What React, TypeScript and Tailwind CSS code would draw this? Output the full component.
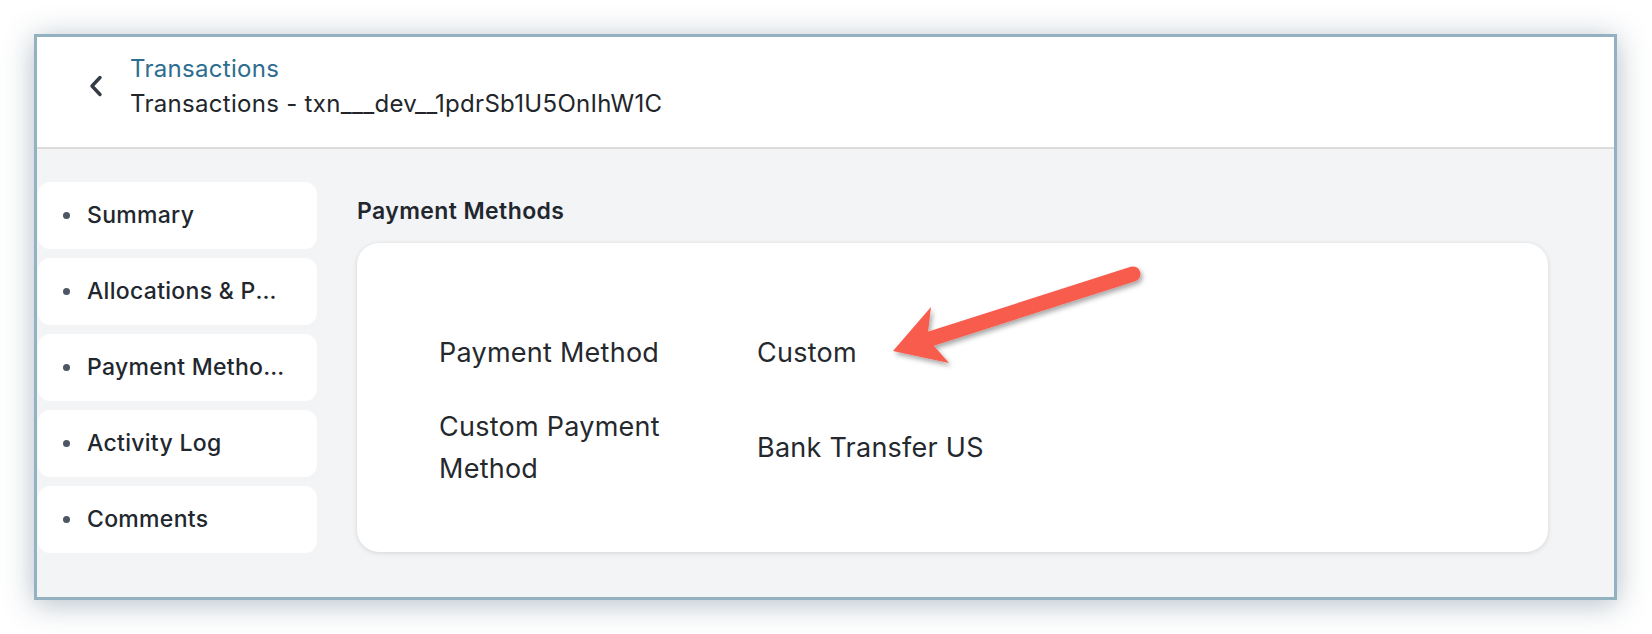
import React from 'react';

const navItems: string[] = [
  'Summary',
  'Allocations & Payments',
  'Payment Methods',
  'Activity Log',
  'Comments',
];

const details = [
  { label: 'Payment Method', value: 'Custom' },
  { label: 'Custom Payment Method', value: 'Bank Transfer US' },
];

const App: React.FC = () => {
  return (
    <div className="relative w-[1652px] h-[634px] bg-white pl-[34px] pr-[35px] pt-[34px] font-['Inter','Noto_Sans',sans-serif]">
      <div className="h-[566px] flex flex-col border-[3px] border-[#93b1c1] bg-[#f3f4f6] shadow-[0_4px_28px_rgba(40,70,95,0.35)]">
        {/* Header */}
        <header className="h-[112px] shrink-0 bg-white border-b-2 border-[#dcdcdc] pt-[13px] pl-[51px]">
          <div className="flex items-center h-[71px]">
            <svg width="16" height="24" viewBox="0 0 16 24" className="shrink-0">
              <polyline
                points="12,3.5 4,12 12,20.5"
                fill="none"
                stroke="#343b45"
                strokeWidth="3.4"
                strokeLinecap="round"
                strokeLinejoin="round"
              />
            </svg>
            <div className="ml-[26px]">
              <div className="text-[24px] leading-[35px] tracking-[0.3px] text-[#2d6d8f]">Transactions</div>
              <div className="text-[24px] leading-[35px] tracking-[0.3px] text-[#22262b]">
                Transactions - txn___dev__1pdrSb1U5OnIhW1C
              </div>
            </div>
          </div>
        </header>

        {/* Body */}
        <div className="flex flex-1 pt-[33px] pl-px pr-[66px]">
          <nav className="w-[279px] shrink-0 flex flex-col gap-[9px]">
            {navItems.map((item) => (
              <div
                key={item}
                className="h-[67px] rounded-xl bg-white flex items-center pl-[25px] pr-[29px]"
              >
                <span className="w-[7px] h-[7px] rounded-full bg-[#4d5665] shrink-0" />
                <span className="ml-[17px] truncate text-[23px] tracking-[0.3px] font-medium text-[#22272e]">
                  {item}
                </span>
              </div>
            ))}
          </nav>

          <main className="ml-[40px] flex-1">
            <h2 className="mt-[15px] text-[23px] leading-[28px] tracking-[0.4px] font-semibold text-[#22272e]">
              Payment Methods
            </h2>
            <div className="mt-[18px] h-[309px] rounded-[22px] bg-white shadow-[0_1px_5px_rgba(0,0,0,0.13)] pt-[89px] pl-[82px]">
              <div className="grid grid-cols-[318px_1fr] gap-y-[32px] items-center">
                {details.map((row) => (
                  <React.Fragment key={row.label}>
                    <div className="pr-[60px] text-[27px] leading-[42px] tracking-[0.25px] text-[#25292e]">
                      {row.label}
                    </div>
                    <div className="text-[27px] leading-[42px] tracking-[0.25px] text-[#25292e]">
                      {row.value}
                    </div>
                  </React.Fragment>
                ))}
              </div>
            </div>
          </main>
        </div>
      </div>

      {/* Annotation arrow */}
      <svg
        className="absolute left-0 top-0 pointer-events-none"
        width="1652"
        height="634"
        viewBox="0 0 1652 634"
      >
        <defs>
          <filter id="arrowShadow" x="-20%" y="-50%" width="140%" height="200%">
            <feDropShadow dx="2" dy="3" stdDeviation="2.5" floodColor="#000" floodOpacity="0.35" />
          </filter>
        </defs>
        <g filter="url(#arrowShadow)" fill="#f75b4e">
          <line x1="1133" y1="274" x2="930" y2="339" stroke="#f75b4e" strokeWidth="15" strokeLinecap="round" />
          <polygon points="893,351 931,307 928,332 934,346 949,363" />
        </g>
      </svg>
    </div>
  );
};

export default App;
